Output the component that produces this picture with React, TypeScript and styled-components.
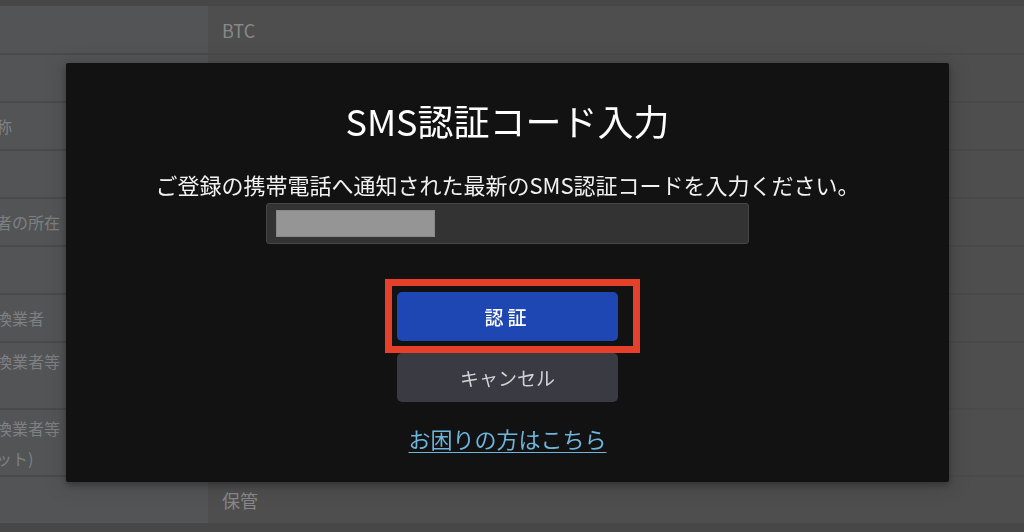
import React from "react";
import styled, { createGlobalStyle } from "styled-components";

const GlobalStyle = createGlobalStyle`
  html, body {
    margin: 0;
    padding: 0;
    background: #474747;
    overflow: hidden;
  }
  body {
    font-family: "Noto Sans CJK JP", "Noto Sans", sans-serif;
  }
  * { box-sizing: border-box; }
`;

const Page = styled.div`
  width: 1024px;
  height: 532px;
  padding-top: 6px;
  background: #474747;
  overflow: hidden;
`;

const Table = styled.div`
  display: grid;
  grid-template-columns: 308px 1fr;
  grid-template-rows: 47px repeat(6, 46px) 65px 65px 46px;
  row-gap: 2px;
  margin-left: -100px;
  background: #4a4a4b;
`;

const LabelCell = styled.div`
  display: flex;
  align-items: center;
  padding: 0 16px;
  background: #535456;
  color: #7f8082;
  font-size: 16px;
  line-height: 30px;
  white-space: nowrap;
`;

const ValueCell = styled.div`
  display: flex;
  align-items: center;
  padding: 0 14px;
  background: #4e4e4e;
  color: #888888;
  font-size: 18px;
  line-height: 30px;
`;

const Overlay = styled.div`
  position: fixed;
  inset: 0;
  display: flex;
  align-items: flex-start;
  justify-content: flex-start;
  padding: 63px 0 0 66px;
`;

const Modal = styled.div`
  width: 883px;
  display: flex;
  flex-direction: column;
  align-items: center;
  padding: 35px 0 28px;
  background: #121212;
  border-radius: 2px;
  box-shadow: 0 3px 7px rgba(0, 0, 0, 0.3), 0 2px 20px 6px rgba(0, 0, 0, 0.09);
`;

const Title = styled.h2`
  margin: 0;
  font-size: 36px;
  line-height: 44px;
  font-weight: 400;
  color: #ffffff;
`;

const Lead = styled.p`
  margin: 26px 0 0;
  font-size: 22px;
  line-height: 32px;
  font-weight: 400;
  color: #f2f2f2;
`;

const CodeField = styled.div`
  margin-top: 3px;
  width: 483px;
  height: 41px;
  padding: 6px 0 0 9px;
  background: #333333;
  border: 1px solid #474747;
  border-radius: 3px;
`;

const Redaction = styled.div`
  width: 159px;
  height: 27px;
  background: #959595;
  border: 1px solid #8a8a8a;
`;

const PrimaryWrap = styled.div`
  position: relative;
  margin-top: 48px;
`;

const Highlight = styled.div`
  position: absolute;
  top: -13px;
  left: -12px;
  right: -22px;
  bottom: -12px;
  border: 7px solid #e6402b;
  pointer-events: none;
`;

const Button = styled.button<{ $variant: "primary" | "secondary" }>`
  display: flex;
  align-items: center;
  justify-content: center;
  width: 221px;
  height: 49px;
  margin: 0;
  padding: 0;
  border: none;
  border-radius: 5px;
  font-family: "Noto Sans CJK JP", "Noto Sans", sans-serif;
  font-size: 19px;
  font-weight: ${(p) => (p.$variant === "primary" ? 500 : 400)};
  letter-spacing: ${(p) => (p.$variant === "primary" ? "4px" : "0")};
  background: ${(p) => (p.$variant === "primary" ? "#1f47b4" : "#3a3a43")};
  color: ${(p) => (p.$variant === "primary" ? "#ffffff" : "#d4d4d6")};
  cursor: pointer;
`;

const CancelButton = styled(Button)`
  margin-top: 12px;
`;

const HelpLink = styled.a`
  margin-top: 20px;
  font-size: 22px;
  line-height: 32px;
  color: #6db5dd;
  text-decoration: underline;
  text-underline-offset: 4px;
  text-decoration-thickness: 1px;
`;

type Row = { label: React.ReactNode; value?: string };

const rows: Row[] = [
  { label: "通貨", value: "BTC" },
  { label: "数量" },
  { label: "送付先の名称" },
  { label: "住所" },
  { label: "送付先の業者の所在" },
  { label: "国名" },
  { label: "暗号資産交換業者" },
  { label: <>暗号資産交換業者等<br />の名称</> },
  { label: <>暗号資産交換業者等<br />自己ウォレット)</> },
  { label: "目的", value: "保管" },
];

export default function App() {
  return (
    <>
      <GlobalStyle />
      <Page>
        <Table>
          {rows.map((r, i) => (
            <React.Fragment key={i}>
              <LabelCell>
                <span>{r.label}</span>
              </LabelCell>
              <ValueCell>{r.value ?? ""}</ValueCell>
            </React.Fragment>
          ))}
        </Table>
      </Page>
      <Overlay>
        <Modal role="dialog" aria-modal="true">
          <Title>SMS認証コード入力</Title>
          <Lead>ご登録の携帯電話へ通知された最新のSMS認証コードを入力ください。</Lead>
          <CodeField>
            <Redaction />
          </CodeField>
          <PrimaryWrap>
            <Button $variant="primary">認証</Button>
            <Highlight />
          </PrimaryWrap>
          <CancelButton $variant="secondary">キャンセル</CancelButton>
          <HelpLink href="#">お困りの方はこちら</HelpLink>
        </Modal>
      </Overlay>
    </>
  );
}
